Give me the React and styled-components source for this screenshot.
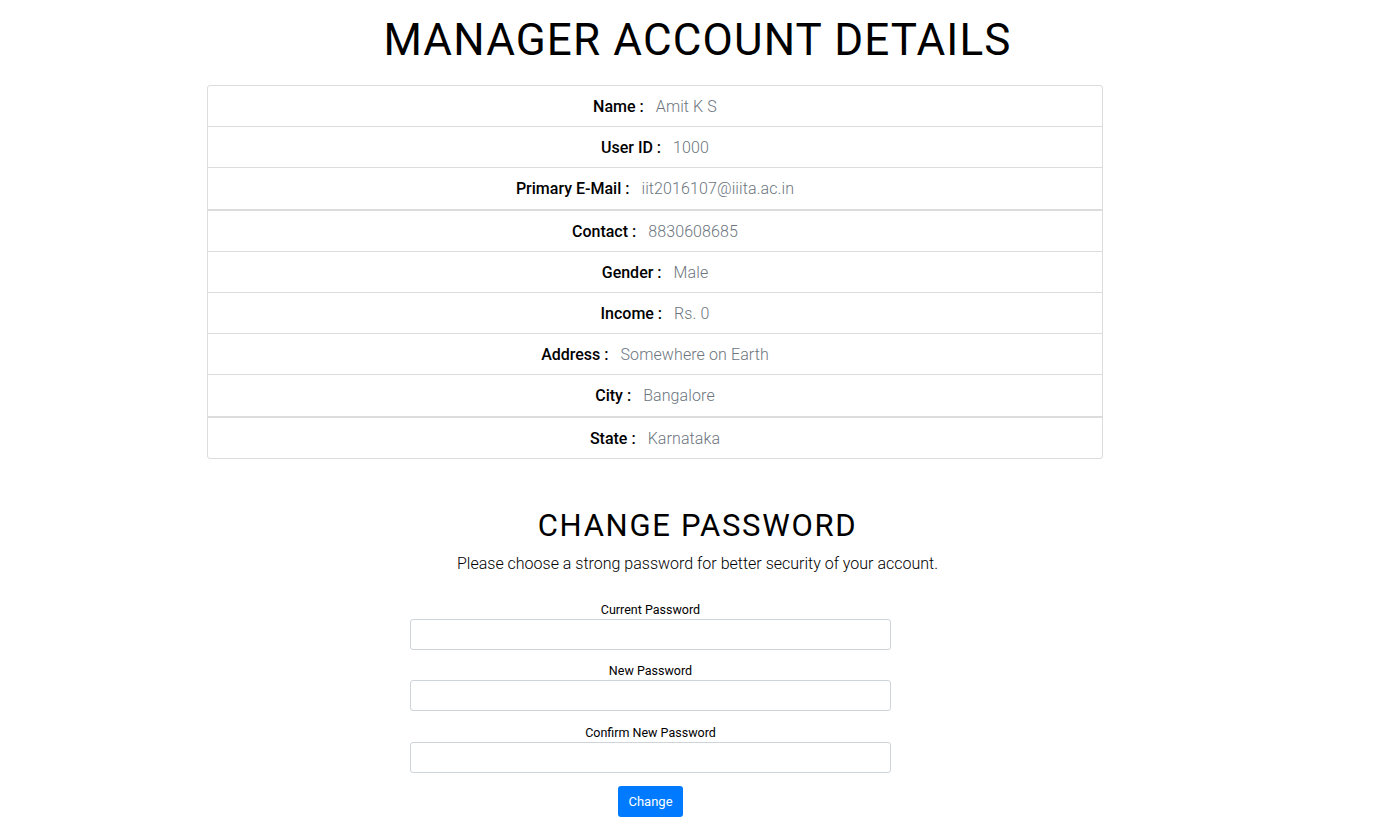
import React from 'react';
import styled, { createGlobalStyle } from 'styled-components';

const GlobalStyle = createGlobalStyle`
  body {
    margin: 0;
    background: #fff;
    font-family: Roboto, "Noto Sans", Arial, sans-serif;
    color: #000;
  }
`;

const Page = styled.div`
  display: flex;
  flex-direction: column;
  padding-top: 14px;
`;

const Heading = styled.div`
  display: flex;
  flex-direction: column;
  align-items: center;
  padding-left: 12px;
`;

const Title = styled.h1`
  margin: 0 0 19px;
  font-size: 44px;
  font-weight: 400;
  letter-spacing: 1.15px;
  line-height: 52px;
`;

const DetailsList = styled.div`
  width: 896px;
  margin-left: 207px;
  box-sizing: border-box;
  border: 1px solid #dcdcdc;
  border-radius: 3px;
  overflow: hidden;
`;

const DetailRow = styled.div`
  display: flex;
  justify-content: center;
  align-items: center;
  height: 39.2px;
  padding-top: 1px;
  font-size: 16px;
  border-top: ${p => (p.$first ? 'none' : p.$thick ? '2px solid #dcdcdc' : '1px solid #dcdcdc')};
`;

const Key = styled.span`
  font-weight: 500;
  margin-right: 12px;
`;

const Value = styled.span`
  font-weight: 300;
  color: #6c757d;
  letter-spacing: 0.1px;
`;

const SubTitle = styled.h2`
  margin: 49px 0 0;
  font-size: 31px;
  font-weight: 400;
  letter-spacing: 1.7px;
  line-height: 36px;
`;

const Lead = styled.p`
  margin: 8px 0 0;
  font-size: 16px;
  font-weight: 300;
  line-height: 24px;
`;

const Form = styled.form`
  display: flex;
  flex-direction: column;
  align-items: center;
  margin: 25px 0 0 410px;
  width: 481px;
`;

const Field = styled.div`
  display: flex;
  flex-direction: column;
  align-items: center;
  width: 100%;
  margin-bottom: 12.5px;
`;

const Label = styled.label`
  font-size: 12.5px;
  line-height: 18px;
  font-weight: 400;
`;

const Input = styled.input`
  width: 100%;
  height: 31px;
  box-sizing: border-box;
  border: 1px solid #ced4da;
  border-radius: 3px;
  padding: 0 8px;
  font-family: inherit;
  font-size: 13px;
`;

const Button = styled.button`
  height: 31px;
  margin-top: 1px;
  padding: 0 10px;
  border: none;
  border-radius: 3px;
  background: #007bff;
  color: #fff;
  font-family: inherit;
  font-size: 13px;
  cursor: pointer;
`;

const details = [
  ['Name', 'Amit K S'],
  ['User ID', '1000'],
  ['Primary E-Mail', 'iit2016107@iiita.ac.in'],
  ['Contact', '8830608685', true],
  ['Gender', 'Male'],
  ['Income', 'Rs. 0'],
  ['Address', 'Somewhere on Earth'],
  ['City', 'Bangalore'],
  ['State', 'Karnataka', true],
];

const fields = ['Current Password', 'New Password', 'Confirm New Password'];

const App = () => {
  return (
    <Page>
      <GlobalStyle />
      <Heading>
        <Title>MANAGER ACCOUNT DETAILS</Title>
      </Heading>
      <DetailsList>
        {details.map(([k, v, thick], i) => (
          <DetailRow key={k} $first={i === 0} $thick={thick}>
            <Key>{k} :</Key>
            <Value>{v}</Value>
          </DetailRow>
        ))}
      </DetailsList>
      <Heading>
        <SubTitle>CHANGE PASSWORD</SubTitle>
        <Lead>Please choose a strong password for better security of your account.</Lead>
      </Heading>
      <Form onSubmit={e => e.preventDefault()}>
        {fields.map(f => (
          <Field key={f}>
            <Label>{f}</Label>
            <Input type="password" />
          </Field>
        ))}
        <Button type="submit">Change</Button>
      </Form>
    </Page>
  );
};

export default App;
